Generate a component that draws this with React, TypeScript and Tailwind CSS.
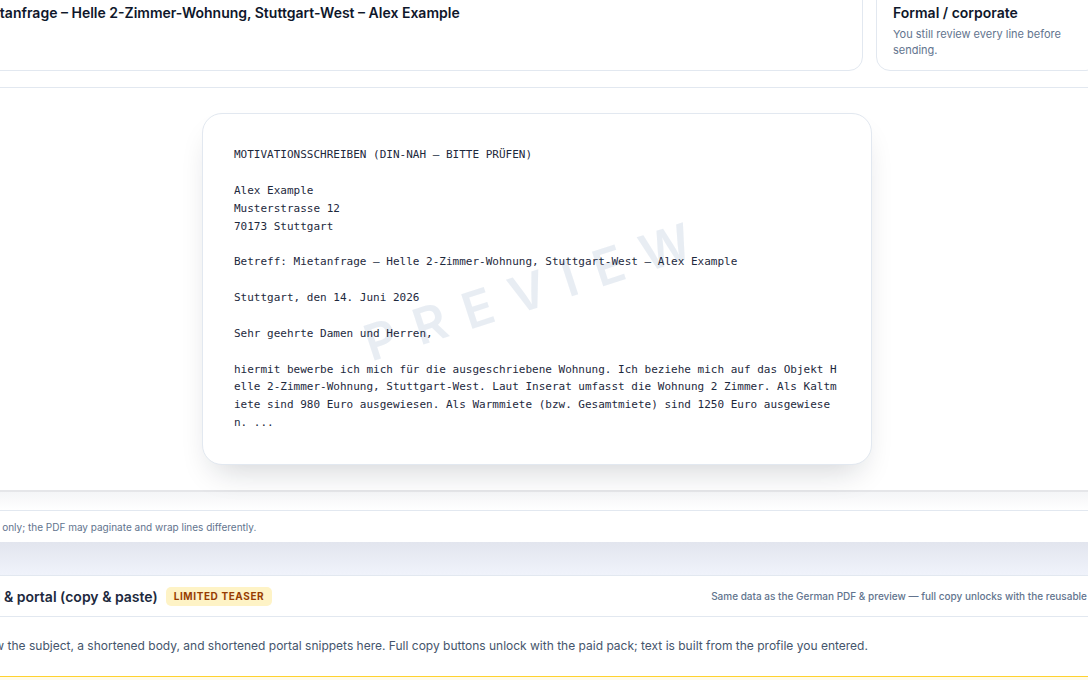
const letter = `MOTIVATIONSSCHREIBEN (DIN-NAH – BITTE PRÜFEN)

Alex Example
Musterstrasse 12
70173 Stuttgart

Betreff: Mietanfrage – Helle 2-Zimmer-Wohnung, Stuttgart-West – Alex Example

Stuttgart, den 14. Juni 2026

Sehr geehrte Damen und Herren,

hiermit bewerbe ich mich für die ausgeschriebene Wohnung. Ich beziehe mich auf das Objekt Helle 2-Zimmer-Wohnung, Stuttgart-West. Laut Inserat umfasst die Wohnung 2 Zimmer. Als Kaltmiete sind 980 Euro ausgewiesen. Als Warmmiete (bzw. Gesamtmiete) sind 1250 Euro ausgewiesen. ...`;

export default function App() {
  return (
    <div className="w-[1088px] h-[680px] overflow-hidden bg-white font-['Inter',sans-serif] text-slate-900">
      <div className="-mt-[14px] -ml-[303px] w-[1680px]">
        {/* summary cards */}
        <div className="flex gap-[13px] pl-[261px] pr-[277px]">
          <div className="flex-1 rounded-[14px] border border-slate-200 px-4 pt-4 pb-3">
            <div className="text-[14px] leading-5 font-semibold text-slate-900">
              Mietanfrage – Helle 2-Zimmer-Wohnung, Stuttgart-West – Alex Example
            </div>
          </div>
          <div className="w-[224px] rounded-[14px] border border-slate-200 px-4 pt-4 pb-3">
            <div className="text-[14px] leading-5 font-semibold text-slate-900">Formal / corporate</div>
            <div className="mt-[3px] text-[11px] leading-4 text-slate-500">
              You still review every line before sending.
            </div>
          </div>
        </div>

        {/* letter preview */}
        <section className="mt-4 border-t border-slate-200">
          <div className="pt-[25px] pb-[25px]">
            <div className="relative mx-auto w-[670px] overflow-hidden rounded-[20px] border border-slate-200 bg-white px-[31px] pt-[32px] pb-[32px] shadow-[0_16px_32px_-12px_rgba(15,23,42,0.2)]">
              <div className="pointer-events-none absolute inset-0 flex items-center justify-center">
                <span className="-rotate-[18deg] text-[50px] font-semibold tracking-[0.38em] text-slate-200/80">
                  PREVIEW
                </span>
              </div>
              <pre className="relative whitespace-pre-wrap break-all font-['DejaVu_Sans_Mono',monospace] text-[11px] leading-[1.625] text-slate-800">
                {letter}
              </pre>
            </div>
          </div>
          <div className="h-[2px] bg-[#e5e6e9]" />
          <div className="h-[18px] bg-gradient-to-b from-[#f4f5f7] to-white" />
          <div className="border-t border-slate-200 pl-[241px] pt-2 pb-[7px] text-[10px] leading-4 text-slate-500">
            Web preview only; the PDF may paginate and wrap lines differently.
          </div>
          <div className="h-[33px] bg-gradient-to-b from-[#e2e5ee] to-[#f0f3fb]" />
        </section>

        {/* copy & paste teaser */}
        <section className="border-t border-slate-200">
          <div className="flex h-[41px] items-center border-b border-slate-200 pl-[267px] pr-[261px]">
            <h2 className="text-[14px] font-semibold text-slate-800">Email &amp; portal (copy &amp; paste)</h2>
            <span className="ml-2 rounded-[5px] bg-amber-100 px-2 py-[3px] text-[10px] leading-[13px] font-bold tracking-[0.06em] text-amber-800">
              LIMITED TEASER
            </span>
            <span className="ml-auto text-[10px] font-medium text-slate-500">
              Same data as the German PDF &amp; preview — full copy unlocks with the reusable pack.
            </span>
          </div>
          <p className="pt-[19px] pb-5 pl-[228px] text-[12px] leading-5 text-slate-600">
            We only show the subject, a shortened body, and shortened portal snippets here. Full copy buttons unlock
            with the paid pack; text is built from the profile you entered.
          </p>
          <div className="h-[12px] border-t border-amber-300 bg-amber-50" />
        </section>
      </div>
    </div>
  );
}
